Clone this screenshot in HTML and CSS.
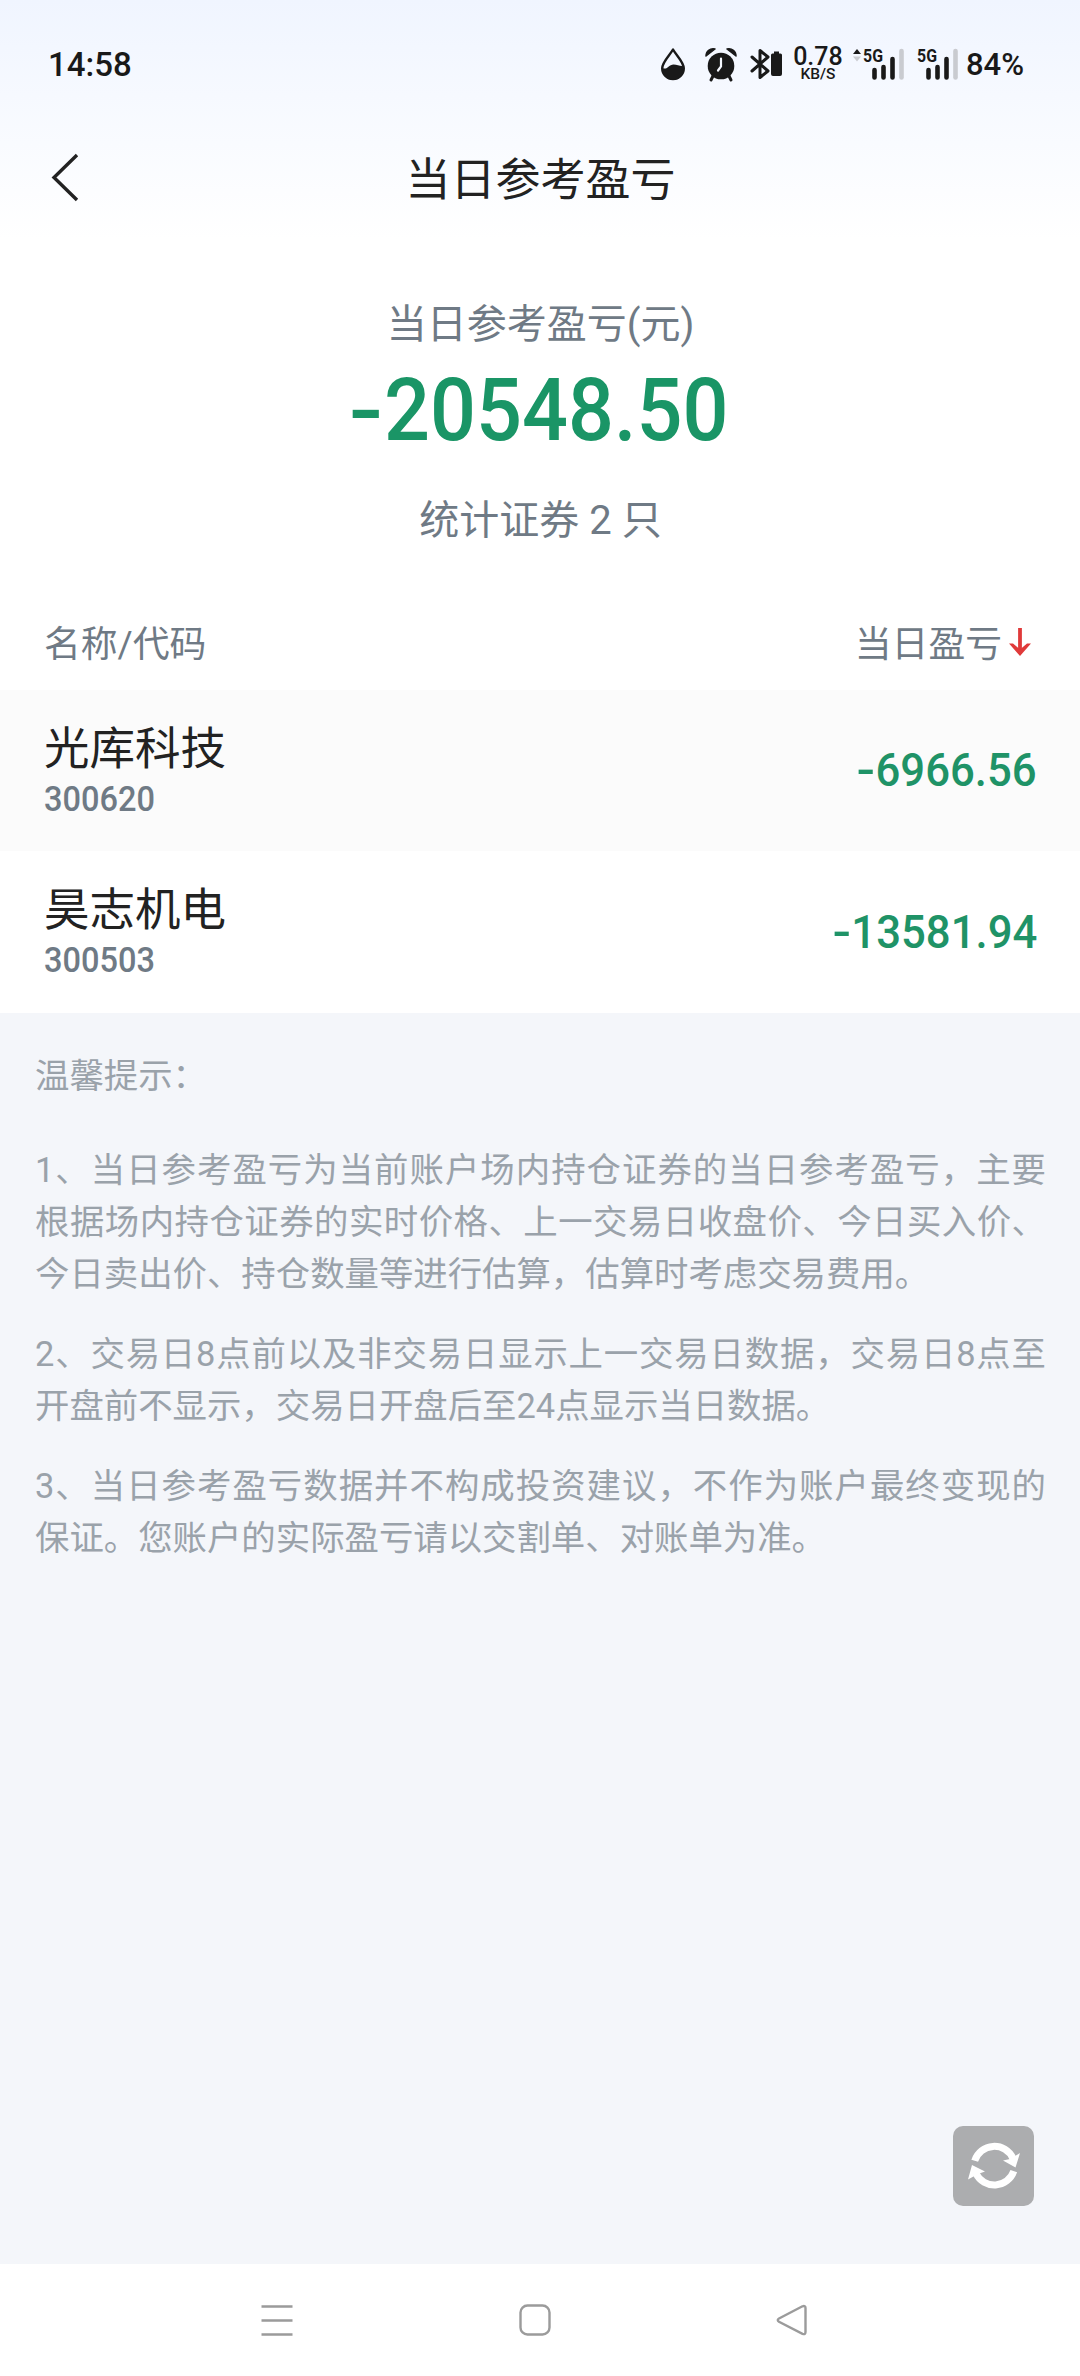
FILE: index.html
```html
<!DOCTYPE html>
<html lang="zh-CN">
<head>
    <meta charset="UTF-8">
    <meta name="viewport" content="width=device-width, initial-scale=1.0">
    <title>当日参考盈亏</title>
    <link rel="stylesheet" href="styles.css">
</head>
<body>
    <div class="top">
        <!-- Status bar -->
        <div class="status-bar">
            <span class="time">14:58</span>
            <div class="status-icons">
                <svg class="icon-drop" width="26" height="34" viewBox="0 0 26 34">
                    <path d="M13 2.5C10 8 2.2 15 2.2 21.3a10.8 10.8 0 0 0 21.6 0C23.8 15 16 8 13 2.5z" fill="none" stroke="#191919" stroke-width="2.4" stroke-linejoin="round"/>
                    <path d="M2.5 21c5 2.500 6-3.500 11-3.500 4 0 6 2 10.300 1.500v3a10.800 10.800 0 0 1-21.600 0z" fill="#191919"/>
                </svg>
                <svg class="icon-alarm" width="32" height="34" viewBox="0 0 32 34">
                    <circle cx="16" cy="19" r="13.300" fill="#191919"/>
                    <path d="M1 9C1 4 5 1 10 2zM31 9C31 4 27 1 22 2z" fill="#191919" stroke="#191919" stroke-width="1.500" stroke-linejoin="round"/>
                    <path d="M8 29l-2 4M24 29l2 4" stroke="#191919" stroke-width="3" stroke-linecap="round"/>
                    <path d="M16 11.500v8l-3 4" fill="none" stroke="#f5f8ff" stroke-width="2.200" stroke-linecap="round"/>
                </svg>
                <svg class="icon-bt" width="32" height="34" viewBox="0 0 32 34">
                    <path d="M2 10l16 14-8 6.500V3.500L18 10 2 24" fill="none" stroke="#191919" stroke-width="3" stroke-linecap="round" stroke-linejoin="round"/>
                    <path d="M24 4.500h5v2h1.500a1.500 1.500 0 0 1 1.500 1.500v19a2 2 0 0 1-2 2h-7a2 2 0 0 1-2-2V8a1.500 1.500 0 0 1 1.500-1.500H24z" fill="#191919"/>
                </svg>
                <div class="speed">
                    <span class="speed-value">0.78</span>
                    <span class="speed-unit">KB/S</span>
                </div>
                <svg class="icon-signal" width="53" height="34" viewBox="0 0 53 34">
                    <path d="M1 7l4-5 4 5z" fill="#191919"/>
                    <path d="M1 9.500l4 5 4-5z" fill="#c9cbd0"/>
                    <text class="net" x="11" y="15" textLength="20" lengthAdjust="spacingAndGlyphs">5G</text>
                    <path d="M22.500 23v7.500M31.500 20v10.500M40.500 12v18.500" stroke="#191919" stroke-width="4.600" stroke-linecap="round"/>
                    <path d="M49.500 4v26.500" stroke="#c9cbd0" stroke-width="4.600" stroke-linecap="round"/>
                </svg>
                <svg class="icon-signal-2" width="42" height="34" viewBox="0 0 42 34">
                    <text class="net" x="0" y="15" textLength="20" lengthAdjust="spacingAndGlyphs">5G</text>
                    <path d="M11.500 23v7.500M20.500 20v10.500M29.500 12v18.500" stroke="#191919" stroke-width="4.600" stroke-linecap="round"/>
                    <path d="M38.500 4v26.500" stroke="#c9cbd0" stroke-width="4.600" stroke-linecap="round"/>
                </svg>
                <span class="battery">84%</span>
            </div>
        </div>

        <!-- Title bar -->
        <header class="nav">
            <svg class="back" width="30" height="50" viewBox="0 0 30 50">
                <path d="M27 2L4 24.500 27 47" fill="none" stroke="#222" stroke-width="3.400"/>
            </svg>
            <h1>当日参考盈亏</h1>
        </header>
    </div>

    <section class="summary">
        <p class="label">当日参考盈亏(元)</p>
        <p class="total"><span class="minus">-</span>20548.50</p>
        <p class="count">统计证券 2 只</p>
    </section>

    <section class="list">
        <div class="list-head">
            <span>名称/代码</span>
            <span class="sort">当日盈亏
                <svg width="22" height="30" viewBox="0 0 22 30">
                    <path d="M11 2v26" stroke="#e03a3a" stroke-width="3.800"/>
                    <path d="M0 17.500h4l7 6 7-6h4L11 30z" fill="#e03a3a"/>
                </svg>
            </span>
        </div>
        <div class="row odd">
            <div>
                <div class="name">光库科技</div>
                <div class="code">300620</div>
            </div>
            <span class="amount"><span class="minus">-</span>6966.56</span>
        </div>
        <div class="row">
            <div>
                <div class="name">昊志机电</div>
                <div class="code">300503</div>
            </div>
            <span class="amount"><span class="minus">-</span>13581.94</span>
        </div>
    </section>

    <section class="tips">
        <p class="tips-title">温馨提示：</p>
        <p>1、当日参考盈亏为当前账户场内持仓证券的当日参考盈亏，主要根据场内持仓证券的实时价格、上一交易日收盘价、今日买入价、今日卖出价、持仓数量等进行估算，估算时考虑交易费用。</p>
        <p>2、交易日8点前以及非交易日显示上一交易日数据，交易日8点至开盘前不显示，交易日开盘后至24点显示当日数据。</p>
        <p>3、当日参考盈亏数据并不构成投资建议，不作为账户最终变现的保证。您账户的实际盈亏请以交割单、对账单为准。</p>
        <button type="button" class="refresh" aria-label="刷新">
            <svg width="54" height="54" viewBox="0 0 54 54">
                <path d="M7.700 21.800A20.500 20.500 0 0 1 46 19.500M46.800 32.200A20.500 20.500 0 0 1 9 34.500" fill="none" stroke="#fff" stroke-width="7"/>
                <path d="M53 14l-4.500 14.500L36 21.500l7-1.500z" fill="#fff"/>
                <path d="M1 40.500L5 26l13 6.500-7 2.500z" fill="#fff"/>
            </svg>
        </button>
    </section>

    <!-- System navigation -->
    <footer class="sys-nav">
        <svg width="32" height="32" viewBox="0 0 32 32">
            <path d="M0.500 2.500h31M0.500 16.500h31M0.500 30.500h31"/>
        </svg>
        <svg width="32" height="32" viewBox="0 0 32 32">
            <rect x="1.500" y="1.500" width="29" height="29" rx="7"/>
        </svg>
        <svg width="32" height="32" viewBox="0 0 32 32">
            <path d="M26.500 2.300L3 14.500q-2.500 1.500 0 3.200L26.500 29.800q3 1 3-1.800V4q0-2.700-3-1.700z"/>
        </svg>
    </footer>
</body>
</html>
```
FILE: styles.css
```css
* {
    box-sizing: border-box;
}

body {
    margin: 0;
    min-height: 2376px;
    display: flex;
    flex-direction: column;
    background: #fff;
    color: #222;
    font-family: Roboto, "Noto Sans CJK SC", sans-serif;
    font-weight: 400;
}

h1, p {
    margin: 0;
    font-weight: inherit;
}

svg {
    display: block;
    flex: none;
    overflow: visible;
}

.top {
    height: 240px;
    background: linear-gradient(#f0f5ff, #fff);
}

/* Status bar */
.status-bar {
    height: 128px;
    padding: 0 56px 0 48px;
    display: flex;
    justify-content: space-between;
    align-items: center;
    color: #191919;
    font-weight: 500;
}

.time {
    font-size: 33px;
}

.status-icons {
    display: flex;
    align-items: center;
}

.icon-drop {
    margin-right: 19px;
}

.icon-alarm {
    margin-right: 13px;
}

.icon-bt {
    margin-right: 11px;
}

.speed {
    width: 50px;
    margin-right: 9px;
    padding-top: 1px;
    display: flex;
    flex-direction: column;
    align-items: center;
}

.speed-value {
    font-size: 25px;
    line-height: 20px;
}

.speed-unit {
    font-size: 15.5px;
    line-height: 15px;
}

.icon-signal {
    margin-right: 12px;
}

.icon-signal-2 {
    margin-right: 7px;
}

.net {
    font-size: 18.5px;
    font-weight: 700;
    fill: #191919;
}

.battery {
    font-size: 31px;
    line-height: 34px;
    padding-top: 2px;
}

/* Title bar */
.nav {
    height: 100px;
    padding: 0 50px;
    display: grid;
    grid-template-columns: 30px 1fr 30px;
    align-items: center;
}

h1 {
    padding: 6px 0 0 1px;
    font-size: 45px;
    line-height: 60px;
    text-align: center;
}

/* Summary */
.summary {
    height: 356px;
    padding: 55px 0 0 1px;
    text-align: center;
    color: #6f7a85;
}

.label, .count {
    font-size: 40px;
    line-height: 60px;
}

/* Figures are set narrower than Roboto's own digits */
.total, .code, .amount {
    font-weight: 500;
    transform: scaleX(0.93);
}

.minus {
    display: inline-block;
    margin-right: 0.05em;
    transform: scaleX(1.25);
}

.total {
    font-size: 87px;
    line-height: 110px;
    color: #1a9566;
}

.count {
    margin-top: 26px;
}

/* List */
.list-head {
    height: 94px;
    padding: 0 49px 4px 44px;
    display: flex;
    justify-content: space-between;
    align-items: center;
    font-size: 36.8px;
    color: #6f7a85;
}

.sort {
    display: flex;
    align-items: center;
    gap: 7px;
}

.row {
    height: 161px;
    padding: 0 43px 2px 44px;
    display: flex;
    justify-content: space-between;
    align-items: center;
}

.row:last-child {
    height: 162px;
}

.odd {
    background: #fbfbfb;
}

.name {
    font-size: 45.5px;
    line-height: 60px;
}

.code {
    font-size: 35px;
    line-height: 40px;
    transform-origin: left;
    color: #6f7a85;
}

.amount {
    font-size: 47px;
    transform-origin: right;
    color: #1f9367;
}

/* Tips */
.tips {
    height: 1251px;
    padding: 37px 34px 58px 35px;
    display: flex;
    flex-direction: column;
    background: #f4f6fa;
    color: #9aa2aa;
    font-size: 34.4px;
    line-height: 52px;
    text-align: justify;
}

.tips p {
    margin-bottom: 28px;
}

.tips .tips-title {
    margin-bottom: 42px;
}

.refresh {
    width: 81px;
    height: 80px;
    margin: auto 12px 0 auto;
    padding: 0;
    display: flex;
    justify-content: center;
    align-items: center;
    background: #acadaf;
    border: none;
    border-radius: 10px;
}

/* System navigation */
.sys-nav {
    height: 112px;
    padding: 0 272px 0 261px;
    display: flex;
    justify-content: space-between;
    align-items: center;
    background: #fff;
    fill: none;
    stroke: #9b9b9b;
    stroke-width: 2.4;
}
```
